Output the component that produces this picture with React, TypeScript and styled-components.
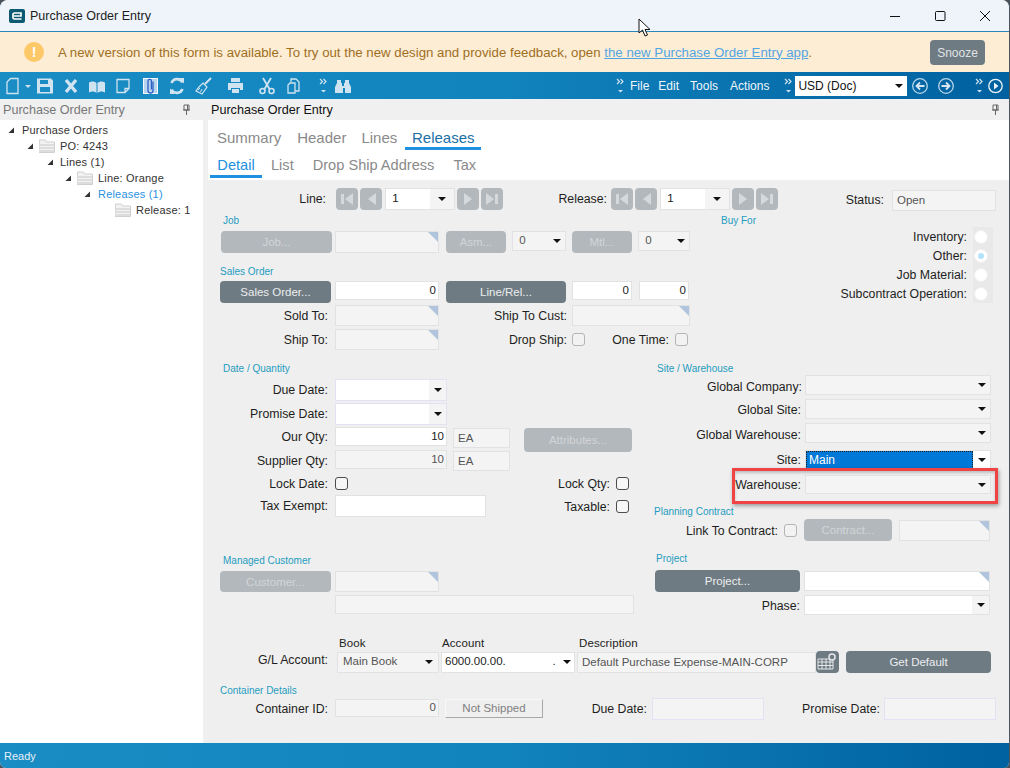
import React from "react";
import styled, { createGlobalStyle } from "styled-components";

const Global = createGlobalStyle`
  html, body { margin: 0; padding: 0; width: 1010px; height: 768px; overflow: hidden; background: #47525c; }
  * { box-sizing: border-box; }
  #root { width: 1010px; height: 768px; }
`;

const Win = styled.div`
  position: relative; width: 1010px; height: 768px; display: flex; flex-direction: column; overflow: hidden;
  border-radius: 8px 8px 6px 6px; background: #efefef; border-right: 1px solid #4a5560;
  font-family: "Liberation Sans", Arial, sans-serif; font-size: 12px; color: #222;
`;
const TitleBar = styled.div`
  height: 32px; flex: none; display: flex; align-items: center; background: #eff4fb; border-bottom: 1px solid #2a86b8; padding-left: 9px;
`;
const Logo = styled.svg` width: 16px; height: 14px; flex: none; `;
const Title = styled.div` font-size: 12.5px; color: #1c1c1c; margin-left: 5px; flex: 1; `;
const WinBtn = styled.svg<{ $ml: number; $mr?: number }>` width: 12px; height: 12px; margin-left: ${p => p.$ml}px; margin-right: ${p => p.$mr ?? 0}px; flex: none; `;
const Banner = styled.div`
  height: 40px; flex: none; display: flex; align-items: center; background: #fdedd5; padding-left: 24px; color: #a06f1d; font-size: 13.25px;
`;
const WarnDot = styled.div`
  width: 20px; height: 20px; border-radius: 50%; background: #fdc868; color: #fff; font-weight: 700; font-size: 14px;
  display: flex; align-items: center; justify-content: center; margin-right: 14px; flex: none;
`;
const BannerText = styled.div` width: 872px; white-space: nowrap; `;
const BannerLink = styled.a` color: #53a5e2; text-decoration: underline; `;
const Snooze = styled.div`
  width: 55px; height: 25px; border-radius: 4px; background: #6f7b82; color: #e0e3e5; font-size: 12px; display: flex; align-items: center; justify-content: center; margin-top: 1px;
`;
const Toolbar = styled.div`
  height: 27px; flex: none; display: flex; align-items: center; background: linear-gradient(90deg, #1b8dc5 0%, #1183bd 50%, #0061a0 100%); color: #eef5fa;
`;
const Tool = styled.svg<{ $ml: number; $w?: number }>`
  width: ${p => p.$w ?? 16}px; height: 18px; margin-left: ${p => p.$ml}px; flex: none; color: #cfe3f0;
`;
const Menu = styled.div<{ $ml: number }>` margin-left: ${p => p.$ml}px; font-size: 12px; color: #f1f6fa; flex: none; `;
const CurrencyBox = styled.div`
  width: 112px; height: 20px; margin-left: 2px; background: #fff; color: #111; font-size: 12px; padding-left: 3px; display: flex; align-items: center; justify-content: space-between; flex: none;
`;
const Body = styled.div` flex: 1; display: flex; min-height: 0; background: #f0f0f0; `;
const Side = styled.div` width: 203px; flex: none; background: #fff; `;
const PaneHead = styled.div<{ $dark?: boolean }>`
  height: 21px; background: #f0f0f0; display: flex; align-items: center; justify-content: space-between;
  padding: 0 ${p => (p.$dark ? "9px 0 3px" : "12px 0 3px")}; font-size: 12.6px; color: ${p => (p.$dark ? "#111" : "#777")};
`;
const Pin = styled.svg` width: 9px; height: 11px; flex: none; `;
const Tree = styled.div` padding-top: 2px; `;
const TreeRow = styled.div<{ $indent: number; $active?: boolean }>`
  height: 16px; display: flex; align-items: center; padding-left: ${p => p.$indent}px; font-size: 11px; letter-spacing: .2px; color: ${p => (p.$active ? "#2a90e2" : "#333")};
`;
const TreeText = styled.span<{ $ml: number }>` margin-left: ${p => p.$ml}px; `;
const TreeIcon = styled.span` margin-left: 5px; display: flex; `;
const TriIcon = styled.svg` width: 7px; height: 7px; flex: none; `;
const FolderIcon = styled.svg` width: 16px; height: 14px; flex: none; `;
const Main = styled.div` width: 801px; margin-left: 5px; flex: none; display: flex; flex-direction: column; margin-right: -1px; `;
const Tabs = styled.div` background: #fff; height: 60px; flex: none; `;
const TabRow = styled.div<{ $h: number }>` display: flex; height: ${p => p.$h}px; align-items: flex-start; `;
const Tab = styled.div<{ $ml: number; $active?: boolean; $w?: number; $dark?: boolean; $pt?: number; $fs?: number }>`
  margin-left: ${p => p.$ml}px; font-size: ${p => p.$fs ?? 14.6}px; height: 100%; padding-top: ${p => p.$pt ?? 9}px; white-space: nowrap; text-align: center;
  width: ${p => (p.$w ? `${p.$w}px` : "auto")};
  color: ${p => (p.$active ? (p.$dark ? "#1b6fa8" : "#2090e0") : "#8a8a8a")};
  border-bottom: ${p => (p.$active ? "3px solid #2090e0" : "0")};
`;
const Form = styled.div` flex: 1; background: #efefef; min-height: 0; display: flex; flex-direction: column; `;
const Split = styled.div<{ $mt?: number }>` display: flex; margin-top: ${p => p.$mt ?? 0}px; `;
const Col = styled.div<{ $w: number }>` width: ${p => p.$w}px; flex: none; `;
const Row = styled.div<{ $mt?: number; $h: number; $pl?: number; $top?: boolean }>`
  display: flex; align-items: ${p => (p.$top ? "flex-start" : "center")}; height: ${p => p.$h}px; margin-top: ${p => p.$mt ?? 0}px; padding-left: ${p => p.$pl ?? 0}px;
`;
const Spacer = styled.span<{ $w: number }>` width: ${p => p.$w}px; flex: none; `;
const Lbl = styled.div<{ $w: number; $up?: number; $mt?: number; $dy?: number }>`
  width: ${p => p.$w}px; flex: none; text-align: right; white-space: nowrap; font-size: 12.3px; color: #1e1e22;
  margin-bottom: ${p => p.$up ?? 0}px; margin-top: ${p => p.$mt ?? 0}px; padding-top: ${p => (p.$dy ?? 0) * 2}px;
`;
const GroupTitle = styled.div<{ $ml: number; $mt?: number }>`
  height: 14px; line-height: 16px; font-size: 10px; color: #1e9cc0; margin-left: ${p => p.$ml}px; margin-top: ${p => p.$mt ?? 0}px; white-space: nowrap;
`;
const Btn = styled.div<{ $w: number; $h?: number; $ml?: number; $mt?: number; $off?: boolean }>`
  width: ${p => p.$w}px; height: ${p => p.$h ?? 22}px; margin-left: ${p => p.$ml ?? 0}px; margin-top: ${p => p.$mt ?? 0}px; flex: none; border-radius: 4px;
  background: ${p => (p.$off ? "#b3b8bc" : "#6f7b82")}; color: ${p => (p.$off ? "#d2d5d8" : "#eceef0")};
  font-size: 11.5px; display: flex; align-items: center; justify-content: center;
`;
const Field = styled.div<{ $w: number; $h?: number; $ml?: number; $mt?: number; $white?: boolean; $lav?: boolean; $right?: boolean; $flag?: boolean }>`
  position: relative; width: ${p => p.$w}px; height: ${p => p.$h ?? 21}px; margin-left: ${p => p.$ml ?? 0}px; margin-top: ${p => p.$mt ?? 0}px; flex: none;
  background: ${p => (p.$white ? "#fff" : "#f4f4f4")}; border: 1px solid ${p => (p.$lav ? "#e4e1f4" : "#e2e2e2")};
  display: flex; align-items: center; justify-content: ${p => (p.$right ? "flex-end" : "flex-start")}; padding: 0 ${p => (p.$right ? 2 : 4)}px ${p => (p.$right ? 2 : 1)}px;
  font-size: 11.5px; color: ${p => (p.$white ? "#222" : "#555")}; white-space: nowrap; overflow: hidden;
  ${p => p.$flag ? `&::after { content: ""; position: absolute; right: 0; top: 0; border-style: solid; border-width: 0 10px 10px 0; border-color: transparent #b0c4de transparent transparent; }` : ""}
`;
const Combo = styled.div<{ $w: number; $h?: number; $ml?: number; $mt?: number; $white?: boolean; $lav?: boolean }>`
  width: ${p => p.$w}px; height: ${p => p.$h ?? 20}px; margin-left: ${p => p.$ml ?? 0}px; margin-top: ${p => p.$mt ?? 0}px; flex: none; display: flex;
  background: ${p => (p.$white ? "#fff" : "#f4f4f4")}; border: 1px solid ${p => (p.$lav ? "#e4e1f4" : "#e2e2e2")};
  font-size: 11.5px; color: ${p => (p.$white ? "#222" : "#555")};
`;
const ComboText = styled.div<{ $pl?: number }>` flex: 1; min-width: 0; display: flex; align-items: center; padding: 0 0 2px ${p => p.$pl ?? 3}px; white-space: nowrap; overflow: hidden; justify-content: space-between; `;
const ComboArrow = styled.div<{ $w?: number; $gray?: boolean }>`
  width: ${p => p.$w ?? 17}px; flex: none; display: flex; align-items: center; justify-content: center; background: ${p => (p.$gray ? "#f4f4f4" : "transparent")};
  &::after { content: ""; border-style: solid; border-width: 4px 4px 0; border-color: #111 transparent transparent; }
`;
const Selected = styled.div`
  flex: 1; background: #0078d7; color: #fff; outline: 1px dotted #222; outline-offset: -1px; display: flex; align-items: center; padding-left: 3px; font-size: 12px;
`;
const NavBtn = styled.svg<{ $ml?: number }>`
  width: 22px; height: 22px; margin-left: ${p => p.$ml ?? 0}px; flex: none; border-radius: 4px; background: #b3b8bc; color: #d6d9db;
`;
const Check = styled.div<{ $ml?: number; $off?: boolean }>`
  width: 13px; height: 13px; margin-left: ${p => p.$ml ?? 0}px; flex: none; border-radius: 3px; background: ${p => (p.$off ? "#f2f2f2" : "#f6f6f6")}; border: 1px solid ${p => (p.$off ? "#b5b5b5" : "#4c4c4c")};
`;
const RadioGrid = styled.div`
  display: grid; grid-template-columns: 153px 6px 20px; grid-auto-rows: 19px; padding-left: 124px;
`;
const RadioLabel = styled.div` text-align: right; white-space: nowrap; grid-column: 1; line-height: 20px; font-size: 12.3px; color: #1e1e22; `;
const RadioCell = styled.div` grid-column: 3; background: #e9e9e9; display: flex; align-items: center; padding-left: 1px; `;
const Radio = styled.div<{ $on?: boolean }>`
  width: 14px; height: 14px; border-radius: 50%; background: #fff; border: 1px solid #f0f0f0; display: flex; align-items: center; justify-content: center;
  &::after { content: ""; width: 6px; height: 6px; border-radius: 50%; background: ${p => (p.$on ? "#b4e2fb" : "transparent")}; }
`;
const HeadCell = styled.div<{ $w: number }>` width: ${p => p.$w}px; flex: none; font-size: 11.5px; color: #222; letter-spacing: .1px; `;
const Ghost = styled.div<{ $w: number; $ml: number; $mt: number }>`
  width: ${p => p.$w}px; height: 19px; margin-left: ${p => p.$ml}px; margin-top: ${p => p.$mt}px; flex: none; background: #efefef; border-right: 1px solid #a8a8a8; border-bottom: 1px solid #a8a8a8;
  border-top: 1px solid #f8f8f8; border-left: 1px solid #f8f8f8; color: #808080; font-size: 11.5px; display: flex; align-items: center; justify-content: center; padding-bottom: 2px;
`;
const CalBtn = styled.svg`
  width: 23px; height: 22px; flex: none; border-radius: 4px; background: #6f7b82; color: #e4e7e9; margin-top: -1px;
`;
const StatusBar = styled.div`
  height: 25px; flex: none; display: flex; align-items: center; padding-left: 4px; font-size: 11px; color: #e6f0f7; background: linear-gradient(90deg, #1b8dc5 0%, #1183bd 50%, #0061a0 100%);
`;
const Highlight = styled.div`
  position: absolute; left: 732px; top: 468px; width: 266px; height: 36px; border: 3px solid #f04444; box-shadow: 1px 2px 4px rgba(0,0,0,.35), inset 0 2px 3px rgba(0,0,0,.2); pointer-events: none;
`;
const Cursor = styled.svg` position: absolute; left: 638px; top: 18px; width: 13px; height: 19px; `;

const Tri = () => (
  <TriIcon viewBox="0 0 7 7"><path d="M6 0.5V6H0.5z" fill="#333" /></TriIcon>
);
const Folder = () => (
  <FolderIcon viewBox="0 0 16 14">
    <path d="M0.5 1h6l1 2h8v10.500h-15.500z" fill="#f2f2f2" stroke="#d0d0d0" />
    <path d="M1 6h14M1 9h14M1 12h14" stroke="#c8c8c8" />
  </FolderIcon>
);
const PinIcon = () => (
  <Pin viewBox="0 0 9 11"><path d="M2 1h5v5H2zM1 6h7M4.500 6v5M5.500 1v5" fill="none" stroke="#666" /></Pin>
);
const Over = ({ ml }: { ml: number }) => (
  <Tool $ml={ml} $w={9} viewBox="0 0 9 18" fill="none">
    <path d="M1 2l2.500 2.500L1 7M4.500 2L7 4.500 4.500 7" stroke="currentColor" strokeWidth="1.200" />
    <path d="M2 13h5l-2.500 2.500z" fill="currentColor" />
  </Tool>
);

const DropBox = ({ children, $bw, $arrowGray, $pl, ...rest }: any) => (
  <Combo {...rest}>
    <ComboText $pl={$pl}>{children}</ComboText>
    <ComboArrow $w={$bw ?? 17} $gray={$arrowGray} />
  </Combo>
);

const navPaths = {
  first: "M5 6h3v10H5zM17 5v12l-8-6z",
  prev: "M16 5v12l-8-6z",
  next: "M7 5v12l8-6z",
  last: "M5 5v12l8-6zM14 6h3v10h-3z",
};
const Nav = ({ d, ml }: { d: string; ml?: number }) => (
  <NavBtn $ml={ml} viewBox="0 0 22 22"><path d={d} fill="currentColor" /></NavBtn>
);
const Pager = () => (
  <>
    <Nav d={navPaths.first} />
    <Nav d={navPaths.prev} ml={2} />
    <DropBox $w={70} $h={22} $ml={3} $white $bw={24} $arrowGray>&nbsp;1</DropBox>
    <Nav d={navPaths.next} ml={2} />
    <Nav d={navPaths.last} ml={2} />
  </>
);

export default function App() {
  return (
    <Win>
      <Global />
      <TitleBar>
        <Logo viewBox="0 0 16 14">
          <rect width="16" height="14" rx="2" fill="#0d5b72" />
          <path d="M12.500 10H5.500a1.500 1.500 0 0 1-1.500-1.500v-3A1.500 1.500 0 0 1 5.500 4h6.500v3H5" fill="none" stroke="#fff" strokeWidth="1.700" />
        </Logo>
        <Title>Purchase Order Entry</Title>
        <WinBtn $ml={0} viewBox="0 0 12 12"><path d="M1 6.500h10" stroke="#111" /></WinBtn>
        <WinBtn $ml={33} viewBox="0 0 12 12"><rect x="1.500" y="1.500" width="9.500" height="9" rx="1" fill="none" stroke="#111" /></WinBtn>
        <WinBtn $ml={33} $mr={18} viewBox="0 0 12 12"><path d="M1 1l10 10M11 1L1 11" stroke="#111" /></WinBtn>
      </TitleBar>
      <Banner>
        <WarnDot>!</WarnDot>
        <BannerText>A new version of this form is available. To try out the new design and provide feedback, open <BannerLink>the new Purchase Order Entry app</BannerLink>.</BannerText>
        <Snooze>Snooze</Snooze>
      </Banner>
      <Toolbar>
        <Tool $ml={6} $w={13} viewBox="0 0 13 18" fill="none"><path d="M4.500 1.500h7.500v15H1V5z" stroke="currentColor" strokeWidth="1.300" /></Tool>
        <Tool $ml={6} $w={6} viewBox="0 0 6 18"><path d="M0 8h6l-3 3z" fill="currentColor" /></Tool>
        <Tool $ml={6} viewBox="0 0 16 18"><path fillRule="evenodd" d="M0 1.500h14l2 2v13H0zM3 3v4h8V3zM3 10v5h10v-5z" fill="currentColor" /></Tool>
        <Tool $ml={11} $w={14} viewBox="0 0 14 18"><path d="M2 3l10 12M12 3L2 15" stroke="currentColor" strokeWidth="3.400" fill="none" /></Tool>
        <Tool $ml={11} viewBox="0 0 16 18"><path d="M0 5.500c3-1.500 5.500-1 7.500.500v10c-2-1.500-4.500-2-7.500-.500zM16 5.500c-3-1.500-5.500-1-7.500.500v10c2-1.500 4.500-2 7.500-.500z" fill="currentColor" /></Tool>
        <Tool $ml={11} $w={14} viewBox="0 0 14 18" fill="none"><path d="M1 2.500h12v9l-4 4H1zM13 11.500H9v4" stroke="currentColor" strokeWidth="1.300" /></Tool>
        <Tool $ml={13} viewBox="0 0 16 18">
          <rect x="0.500" y="1.500" width="14" height="15" fill="#b9d4ee" stroke="#f4f8fc" />
          <path d="M10 4.500v9a2.500 2.500 0 0 1-5 0V4a1.700 1.700 0 0 1 3.400 0v8.500" fill="none" stroke="#2a5fc4" strokeWidth="1.300" />
        </Tool>
        <Tool $ml={10} viewBox="0 0 16 18" fill="none">
          <path d="M13.500 5.500A6 6 0 0 0 2.500 6M2.500 12.500A6 6 0 0 0 13.500 12" stroke="currentColor" strokeWidth="2.600" />
          <path d="M10 1h5v5.500zM6 17H1v-5.500z" fill="currentColor" />
        </Tool>
        <Tool $ml={10} $w={17} viewBox="0 0 17 18" fill="none">
          <path d="M16 1l-6 6" stroke="currentColor" strokeWidth="2" />
          <path d="M8 6l4 4-5 7-6-3 3-4z" stroke="currentColor" strokeWidth="1.200" />
          <path d="M5 11l-2 2M7 12l-1.500 3" stroke="currentColor" />
        </Tool>
        <Tool $ml={15} $w={17} viewBox="0 0 17 18"><path fillRule="evenodd" d="M4 1h9v4H4zM1 6h15v7h-3v-2H4v2H1zM5 12h7v4H5z" fill="currentColor" /></Tool>
        <Tool $ml={15} viewBox="0 0 16 18" fill="none">
          <path d="M4 1l6.500 11M12 1L5.500 12" stroke="currentColor" strokeWidth="1.800" />
          <circle cx="3.500" cy="14" r="2.500" stroke="currentColor" strokeWidth="1.600" />
          <circle cx="12.500" cy="14" r="2.500" stroke="currentColor" strokeWidth="1.600" />
        </Tool>
        <Tool $ml={12} $w={13} viewBox="0 0 13 18" fill="none"><path d="M4 5V2h5l3 3v9H8M8 6H3L1 8v8h7z" stroke="currentColor" strokeWidth="1.300" /></Tool>
        <Over ml={19} />
        <Tool $ml={7} viewBox="0 0 16 18"><path d="M2 3h4v3h1v3h2V6h1V3h4v3l2 4v6h-6v-5H8v5H0v-6l2-4z" fill="currentColor" /></Tool>
        <Over ml={265} />
        <Menu $ml={5}>File</Menu>
        <Menu $ml={9}>Edit</Menu>
        <Menu $ml={11}>Tools</Menu>
        <Menu $ml={12}>Actions</Menu>
        <Over ml={15} />
        <CurrencyBox>USD (Doc)<ComboArrow $w={16} /></CurrencyBox>
        <Tool $ml={5} viewBox="0 0 16 18" fill="none"><circle cx="8" cy="9" r="7.300" stroke="#b9d6e8" strokeWidth="1.300" /><path d="M12.500 9H5M8 5.500L4.500 9 8 12.500" stroke="#d5e6f2" strokeWidth="1.800" /></Tool>
        <Tool $ml={10} viewBox="0 0 16 18" fill="none"><circle cx="8" cy="9" r="7.300" stroke="#b9d6e8" strokeWidth="1.300" /><path d="M3.500 9H11M8 5.500L11.500 9 8 12.500" stroke="#d5e6f2" strokeWidth="1.800" /></Tool>
        <Over ml={21} />
        <Tool $ml={4} $w={15} viewBox="0 0 15 18" fill="none"><circle cx="7.500" cy="9" r="6.700" stroke="#eef5fa" strokeWidth="1.300" /><path d="M6 5.500L10.500 9 6 12.500z" fill="#eef5fa" /></Tool>
      </Toolbar>
      <Body>
        <Side>
          <PaneHead>Purchase Order Entry<PinIcon /></PaneHead>
          <Tree>
            <TreeRow $indent={8}><Tri /><TreeText $ml={7}>Purchase Orders</TreeText></TreeRow>
            <TreeRow $indent={27}><Tri /><TreeIcon><Folder /></TreeIcon><TreeText $ml={5}>PO: 4243</TreeText></TreeRow>
            <TreeRow $indent={47}><Tri /><TreeText $ml={6}>Lines (1)</TreeText></TreeRow>
            <TreeRow $indent={65}><Tri /><TreeIcon><Folder /></TreeIcon><TreeText $ml={5}>Line: Orange</TreeText></TreeRow>
            <TreeRow $indent={84} $active><Tri /><TreeText $ml={7}>Releases (1)</TreeText></TreeRow>
            <TreeRow $indent={115}><Folder /><TreeText $ml={5}>Release: 1</TreeText></TreeRow>
          </Tree>
        </Side>
        <Main>
          <PaneHead $dark>Purchase Order Entry<PinIcon /></PaneHead>
          <Tabs>
            <TabRow $h={30}>
              <Tab $ml={9} $fs={15}>Summary</Tab>
              <Tab $ml={16} $fs={15}>Header</Tab>
              <Tab $ml={15} $fs={15}>Lines</Tab>
              <Tab $ml={8} $w={76} $fs={15} $active $dark>Releases</Tab>
            </TabRow>
            <TabRow $h={28}>
              <Tab $ml={2} $w={52} $active $pt={7}>Detail</Tab>
              <Tab $ml={9} $pt={7}>List</Tab>
              <Tab $ml={19} $pt={7}>Drop Ship Address</Tab>
              <Tab $ml={19} $pt={7}>Tax</Tab>
            </TabRow>
          </Tabs>
          <Form>
            <Row $mt={8} $h={23} $top>
              <Lbl $w={118} $mt={4}>Line:</Lbl>
              <Spacer $w={10} />
              <Pager />
              <Lbl $w={104} $mt={4}>Release:</Lbl>
              <Spacer $w={4} />
              <Pager />
              <Lbl $w={106} $mt={5}>Status:</Lbl>
              <Field $w={104} $ml={8} $mt={2}>Open</Field>
            </Row>
            <Split>
              <Col $w={482}>
                <GroupTitle $ml={15} $mt={2}>Job</GroupTitle>
                <Row $mt={4} $h={22} $pl={13} $top>
                  <Btn $w={111} $off>Job...</Btn>
                  <Field $w={104} $h={22} $ml={3} $flag />
                  <Btn $w={60} $ml={7} $off>Asm...</Btn>
                  <DropBox $w={54} $ml={6}>&nbsp;0</DropBox>
                  <Btn $w={60} $ml={6} $off>Mtl...</Btn>
                  <DropBox $w={52} $ml={6}>&nbsp;0</DropBox>
                </Row>
                <GroupTitle $ml={12} $mt={11}>Sales Order</GroupTitle>
                <Row $mt={3} $h={22} $pl={12} $top>
                  <Btn $w={111}>Sales Order...</Btn>
                  <Field $w={104} $h={19} $ml={4} $white $right>0</Field>
                  <Btn $w={120} $ml={7}>Line/Rel...</Btn>
                  <Field $w={60} $h={19} $ml={6} $white $right>0</Field>
                  <Field $w={50} $h={19} $ml={7} $white $right>0</Field>
                </Row>
                <Row $mt={2} $h={21}>
                  <Lbl $w={120}>Sold To:</Lbl>
                  <Field $w={104} $ml={7} $flag />
                  <Lbl $w={128}>Ship To Cust:</Lbl>
                  <Field $w={118} $ml={5} $flag />
                </Row>
                <Row $mt={3} $h={21}>
                  <Lbl $w={120}>Ship To:</Lbl>
                  <Field $w={104} $ml={7} $flag />
                  <Lbl $w={128}>Drop Ship:</Lbl>
                  <Check $ml={5} $off />
                  <Lbl $w={84}>One Time:</Lbl>
                  <Check $ml={6} $off />
                </Row>
              </Col>
              <Col $w={320}>
                <GroupTitle $ml={31} $mt={2}>Buy For</GroupTitle>
                <RadioGrid>
                  <RadioLabel>Inventory:</RadioLabel><RadioCell><Radio /></RadioCell>
                  <RadioLabel>Other:</RadioLabel><RadioCell><Radio $on /></RadioCell>
                  <RadioLabel>Job Material:</RadioLabel><RadioCell><Radio /></RadioCell>
                  <RadioLabel>Subcontract Operation:</RadioLabel><RadioCell><Radio /></RadioCell>
                </RadioGrid>
              </Col>
            </Split>
            <Split $mt={8}>
              <Col $w={432}>
                <GroupTitle $ml={15} $mt={3}>Date / Quantity</GroupTitle>
                <Row $mt={4} $h={22}>
                  <Lbl $w={120} $up={1}>Due Date:</Lbl>
                  <DropBox $w={112} $h={22} $ml={7} $white $lav $arrowGray />
                </Row>
                <Row $mt={2} $h={22}>
                  <Lbl $w={120} $up={1}>Promise Date:</Lbl>
                  <DropBox $w={112} $h={22} $ml={7} $white $lav $arrowGray />
                </Row>
                <Row $mt={2} $h={23} $top>
                  <Lbl $w={120} $mt={3}>Our Qty:</Lbl>
                  <Field $w={112} $h={19} $ml={7} $white $right>10</Field>
                  <Field $w={57} $h={20} $ml={6} $mt={1}>EA</Field>
                  <Btn $w={108} $h={24} $ml={14} $mt={1} $off>Attributes...</Btn>
                </Row>
                <Row $h={23} $top>
                  <Lbl $w={120} $mt={4}>Supplier Qty:</Lbl>
                  <Field $w={112} $h={19} $ml={7} $right>10</Field>
                  <Field $w={57} $h={20} $ml={6} $mt={1}>EA</Field>
                </Row>
                <Row $h={20}>
                  <Lbl $w={120} $dy={1}>Lock Date:</Lbl>
                  <Check $ml={7} />
                  <Lbl $w={262} $dy={1}>Lock Qty:</Lbl>
                  <Check $ml={6} />
                </Row>
                <Row $mt={2} $h={22}>
                  <Lbl $w={120}>Tax Exempt:</Lbl>
                  <Field $w={151} $h={22} $ml={7} $white />
                  <Lbl $w={124} $dy={1}>Taxable:</Lbl>
                  <Check $ml={6} />
                </Row>
                <GroupTitle $ml={15} $mt={36}>Managed Customer</GroupTitle>
                <Row $mt={4} $h={21} $pl={12}>
                  <Btn $w={111} $h={21} $off>Customer...</Btn>
                  <Field $w={104} $ml={4} $flag />
                </Row>
                <Row $mt={3} $h={19}>
                  <Field $w={299} $h={19} $ml={127} />
                </Row>
              </Col>
              <Col $w={370}>
                <GroupTitle $ml={17} $mt={3}>Site / Warehouse</GroupTitle>
                <Row $h={20}>
                  <Lbl $w={162} $dy={2}>Global Company:</Lbl>
                  <DropBox $w={186} $ml={3} />
                </Row>
                <Row $mt={4} $h={20}>
                  <Lbl $w={161} $dy={1}>Global Site:</Lbl>
                  <DropBox $w={186} $ml={4} />
                </Row>
                <Row $mt={4} $h={20}>
                  <Lbl $w={161} $dy={2}>Global Warehouse:</Lbl>
                  <DropBox $w={186} $ml={4} />
                </Row>
                <Row $mt={7} $h={20}>
                  <Lbl $w={161}>Site:</Lbl>
                  <Combo $w={186} $ml={4} $white>
                    <Selected>Main</Selected>
                    <ComboArrow />
                  </Combo>
                </Row>
                <Row $mt={5} $h={19}>
                  <Lbl $w={161}>Warehouse:</Lbl>
                  <DropBox $w={186} $h={19} $ml={4} />
                </Row>
                <GroupTitle $ml={14} $mt={10}>Planning Contract</GroupTitle>
                <Row $mt={1} $h={22}>
                  <Lbl $w={138} $dy={1}>Link To Contract:</Lbl>
                  <Check $ml={6} $off />
                  <Btn $w={88} $ml={7} $off>Contract...</Btn>
                  <Field $w={91} $ml={7} $flag />
                </Row>
                <GroupTitle $ml={16} $mt={10}>Project</GroupTitle>
                <Row $mt={5} $h={22} $pl={15}>
                  <Btn $w={145}>Project...</Btn>
                  <Field $w={186} $h={20} $ml={4} $white $flag />
                </Row>
                <Row $mt={3} $h={20}>
                  <Lbl $w={160} $dy={1}>Phase:</Lbl>
                  <DropBox $w={186} $ml={4} $white $arrowGray />
                </Row>
              </Col>
            </Split>
            <Row $mt={21} $h={14} $pl={131}>
              <HeadCell $w={103}>Book</HeadCell>
              <HeadCell $w={137}>Account</HeadCell>
              <HeadCell $w={100}>Description</HeadCell>
            </Row>
            <Row $mt={1} $h={22}>
              <Lbl $w={120} $up={5}>G/L Account:</Lbl>
              <DropBox $w={102} $h={21} $ml={9} $bw={19} $pl={5}>Main Book</DropBox>
              <DropBox $w={134} $h={21} $ml={2} $white $bw={15}>6000.00.00.<span>.&nbsp;</span></DropBox>
              <Field $w={239} $ml={2}>Default Purchase Expense-MAIN-CORP</Field>
              <CalBtn viewBox="0 0 23 22">
                <path d="M2 8h15v10H2zM2 11h15M2 14.500h15M6 8v10M10 8v10M14 8v10" fill="none" stroke="currentColor" />
                <circle cx="16" cy="6" r="3" fill="#6f7b82" stroke="currentColor" strokeWidth="1.500" />
              </CalBtn>
              <Btn $w={145} $h={22} $ml={7}>Get Default</Btn>
            </Row>
            <GroupTitle $ml={12} $mt={10}>Container Details</GroupTitle>
            <Row $mt={1} $h={22} $top>
              <Lbl $w={120} $mt={4}>Container ID:</Lbl>
              <Field $w={104} $h={18} $ml={7} $mt={1} $right>0</Field>
              <Ghost $w={98} $ml={6} $mt={1}>Not Shipped</Ghost>
              <Lbl $w={104} $mt={4}>Due Date:</Lbl>
              <Field $w={112} $h={22} $ml={5} $lav />
              <Lbl $w={116} $mt={4}>Promise Date:</Lbl>
              <Field $w={112} $h={22} $ml={4} $lav />
            </Row>
          </Form>
        </Main>
      </Body>
      <StatusBar>Ready</StatusBar>
      <Highlight />
      <Cursor viewBox="0 0 13 19"><path d="M1 1v14l3.500-3 2.500 6 2.500-1-2.500-5.500h5z" fill="#fff" stroke="#111" /></Cursor>
    </Win>
  );
}
